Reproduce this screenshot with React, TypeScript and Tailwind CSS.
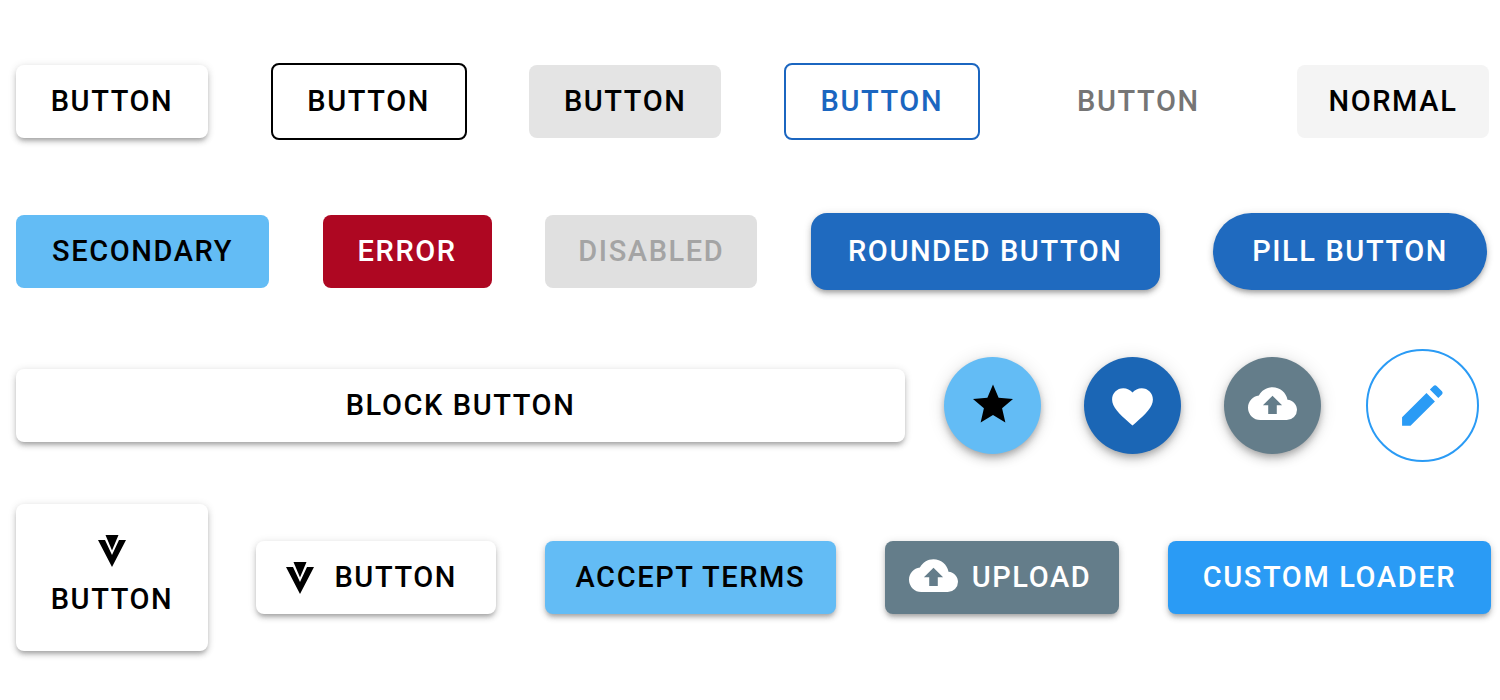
import type { ButtonHTMLAttributes } from 'react';
import { clsx } from 'clsx';

const ELEVATED = 'shadow-[0_4px_4px_-2px_rgba(0,0,0,0.2),0_4px_6px_rgba(0,0,0,0.14),0_1px_9px_rgba(0,0,0,0.12)]';
const FLOATING = 'shadow-[0_3px_6px_-1px_rgba(0,0,0,0.2),0_6px_10px_rgba(0,0,0,0.14),0_1px_18px_rgba(0,0,0,0.12)]';

const icons = {
  star: {
    viewBox: '0 0.8 24 24',
    d: 'M12,17.27L18.18,21L16.54,13.97L22,9.24L14.81,8.62L12,2L9.19,8.62L2,9.24L7.45,13.97L5.82,21L12,17.27Z',
  },
  heart: {
    viewBox: '0 -0.5 24 24',
    d: 'M12,21.35L10.55,20.03C5.4,15.36 2,12.27 2,8.5C2,5.41 4.42,3 7.5,3C9.24,3 10.91,3.81 12,5.08C13.09,3.81 14.76,3 16.5,3C19.58,3 22,5.41 22,8.5C22,12.27 18.6,15.36 13.45,20.03L12,21.35Z',
  },
  cloudUpload: {
    viewBox: '0 0.9 24 24',
    d: 'M14.1,12.8V17.1H9.9V12.8H7.3L12,8.1L16.7,12.8M19.35,10.03C18.67,6.59 15.64,4 12,4C9.11,4 6.6,5.64 5.35,8.03C2.34,8.36 0,10.9 0,14A6,6 0 0,0 6,20H19A5,5 0 0,0 24,15C24,12.36 21.95,10.22 19.35,10.03Z',
  },
  pencil: {
    viewBox: '0.3 0.2 24 24',
    d: 'M20.71,7.04C21.1,6.65 21.1,6 20.71,5.63L18.37,3.29C18,2.9 17.35,2.9 16.96,3.29L15.35,4.9L19.1,8.65M3,17.25V21H6.75L17.6,10.15L13.85,6.4L3,17.25Z',
  },
};

function Icon({ name, className = 'size-[49px]' }: { name: keyof typeof icons; className?: string }) {
  const { viewBox, d } = icons[name];

  return (
    <svg viewBox={viewBox} fill="currentColor" aria-hidden="true" className={clsx('shrink-0', className)}>
      <path d={d} />
    </svg>
  );
}

function Logo() {
  return (
    <svg viewBox="0 0 28 32" fill="currentColor" aria-hidden="true" className="h-8 w-7 shrink-0">
      <path d="M7.5 0H20.5L14 15.5Z" />
      <path d="M0 5H7L14 20L21 5H28L14 32Z" />
    </svg>
  );
}

function Btn({ className, ...props }: ButtonHTMLAttributes<HTMLButtonElement>) {
  return (
    <button
      type="button"
      className={clsx(
        'flex min-h-[73px] shrink-0 items-center justify-center whitespace-nowrap text-[29px] leading-[33px] font-medium tracking-[0.055em] uppercase',
        className,
      )}
      {...props}
    />
  );
}

function Fab({ className, ...props }: ButtonHTMLAttributes<HTMLButtonElement>) {
  return (
    <button
      type="button"
      className={clsx('flex shrink-0 items-center justify-center rounded-full', className)}
      {...props}
    />
  );
}

export default function App() {
  return (
    <main className="bg-white pt-[63px] pb-12 pl-4 font-['Roboto','Liberation_Sans',sans-serif] text-black">
      {/* Basic variants */}
      <div className="flex items-center justify-between pr-[11px]">
        <Btn className={clsx('w-48 rounded-lg bg-white', ELEVATED)}>Button</Btn>
        <Btn className="h-[77px] w-[196px] rounded-lg border-2 border-black">Button</Btn>
        <Btn className="w-48 rounded-lg bg-[#e4e4e4]">Button</Btn>
        <Btn className="h-[77px] w-[196px] rounded-lg border-2 border-[#1b66c0] text-[#1b66c0]">Button</Btn>
        <Btn className="w-48 rounded-lg text-[#757575]">Button</Btn>
        <Btn className="w-48 rounded-lg bg-[#f4f4f4]">Normal</Btn>
      </div>

      {/* Colors and shapes */}
      <div className="mt-[73px] flex items-center justify-between pr-[13px]">
        <Btn className="rounded-lg bg-[#63bcf5] px-9">Secondary</Btn>
        <Btn className="rounded-lg bg-[#ae0722] px-[35px] text-white">Error</Btn>
        <Btn disabled className="rounded-lg bg-[#e0e0e0] px-[33px] text-[#a4a4a4]">
          Disabled
        </Btn>
        <Btn className={clsx('h-[77px] rounded-2xl bg-[#1f6abf] px-[37px] text-white', ELEVATED)}>Rounded Button</Btn>
        <Btn className={clsx('h-[77px] rounded-full bg-[#1f6abf] px-[39px] text-white', ELEVATED)}>Pill Button</Btn>
      </div>

      {/* Block and floating buttons */}
      <div className="mt-[59px] flex items-center pr-[21px]">
        <Btn className={clsx('mr-[39px] flex-1 rounded-lg bg-white', ELEVATED)}>Block Button</Btn>
        <div className="flex items-center gap-[43px]">
          <Fab aria-label="Favorite" className={clsx('size-[97px] bg-[#63bcf5]', FLOATING)}>
            <Icon name="star" className="size-12" />
          </Fab>
          <Fab aria-label="Like" className={clsx('size-[97px] bg-[#1b66b5] text-white', FLOATING)}>
            <Icon name="heart" />
          </Fab>
          <Fab aria-label="Upload" className={clsx('size-[97px] bg-[#647d8a] text-white', FLOATING)}>
            <Icon name="cloudUpload" />
          </Fab>
          <Fab aria-label="Edit" className="ml-0.5 size-[113px] border-2 border-[#2a9bf5] text-[#2a9bf5]">
            <Icon name="pencil" className="size-[54px]" />
          </Fab>
        </div>
      </div>

      {/* Buttons with icons */}
      <div className="mt-[42px] flex items-center justify-between pr-[9px]">
        <Btn className={clsx('h-[147px] w-48 flex-col gap-4 rounded-lg bg-white pb-1', ELEVATED)}>
          <Logo />
          Button
        </Btn>
        <Btn className={clsx('gap-5 rounded-lg bg-white pr-[39px] pl-[30px]', ELEVATED)}>
          <Logo />
          Button
        </Btn>
        <Btn className={clsx('rounded-lg bg-[#63bcf5] px-[31px]', ELEVATED)}>Accept Terms</Btn>
        <Btn className={clsx('gap-3.5 rounded-lg bg-[#647d8a] pr-7 pl-6 text-white', ELEVATED)}>
          <Icon name="cloudUpload" />
          Upload
        </Btn>
        <Btn className={clsx('rounded-lg bg-[#2a9bf5] px-[35px] text-white', ELEVATED)}>Custom Loader</Btn>
      </div>
    </main>
  );
}
